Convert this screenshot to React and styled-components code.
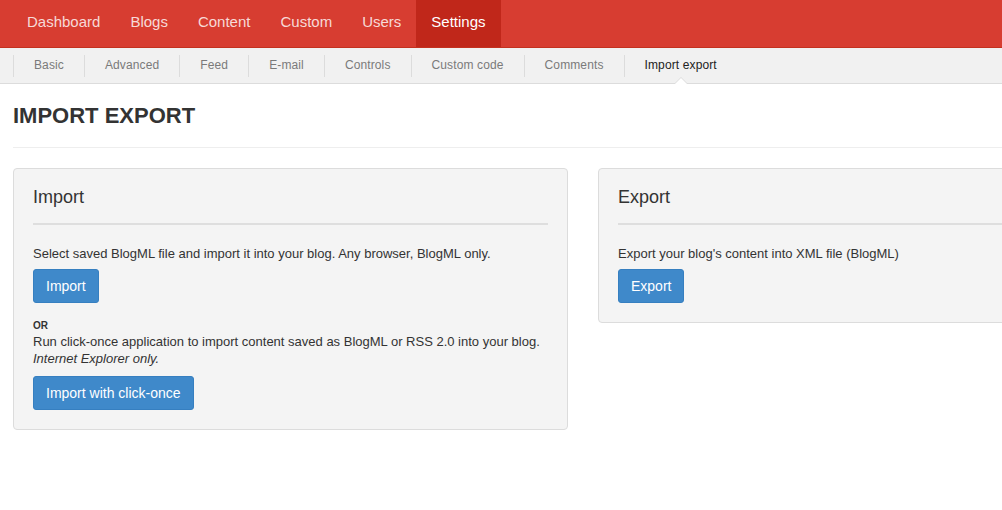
import React from "react";
import styled, { createGlobalStyle } from "styled-components";

const GlobalStyle = createGlobalStyle`
  html, body {
    margin: 0;
    padding: 0;
    background: #fff;
    font-family: "Liberation Sans", Arial, sans-serif;
    color: #333;
    overflow: hidden;
  }
  * {
    box-sizing: border-box;
  }
`;

const TopNav = styled.nav`
  display: flex;
  background: #d73d31;
  border-bottom: 1px solid #c3311f;
  padding-left: 12px;
`;

const TopItem = styled.a`
  display: block;
  padding: 12px 15px 15px;
  font-size: 15px;
  line-height: 20px;
  text-decoration: none;
  color: ${(props) => (props.active ? "#fff" : "rgba(255, 255, 255, 0.82)")};
  background: ${(props) => (props.active ? "#c0271a" : "transparent")};
  cursor: pointer;
`;

const SubNav = styled.nav`
  display: flex;
  background: #f1f1f1;
  border-bottom: 1px solid #dcdcdc;
  padding: 7px 0 6px 13px;
`;

const SubItem = styled.a`
  position: relative;
  display: block;
  padding: 2px 20px 3px;
  border-left: 1px solid #dcdcdc;
  font-size: 12px;
  line-height: 17px;
  letter-spacing: 0.12px;
  text-decoration: none;
  color: ${(props) => (props.active ? "#222" : "#7a7a7a")};
  cursor: pointer;

  ${(props) =>
    props.active &&
    `
    &::before,
    &::after {
      content: "";
      position: absolute;
      left: 50%;
      width: 0;
      height: 0;
      border-style: solid;
      border-color: transparent;
    }
    &::before {
      bottom: -7px;
      margin-left: -7px;
      border-width: 0 7px 7px 7px;
      border-bottom-color: #dcdcdc;
    }
    &::after {
      bottom: -7px;
      margin-left: -6px;
      border-width: 0 6px 6px 6px;
      border-bottom-color: #fff;
    }
  `}
`;

const Page = styled.main`
  padding: 0 0 0 13px;
`;

const PageHeader = styled.header`
  border-bottom: 1px solid #eee;
  padding: 20px 0 19px;
  margin-bottom: 20px;
`;

const Title = styled.h1`
  margin: 0;
  font-size: 22px;
  line-height: 24px;
  font-weight: bold;
  color: #333;
  white-space: nowrap;
`;

const Columns = styled.div`
  display: grid;
  grid-template-columns: 555px 555px;
  gap: 30px;
  align-items: start;
`;

const Panel = styled.section`
  background: #f4f4f4;
  border: 1px solid #dcdcdc;
  border-radius: 4px;
  padding: 18px 19px 19px;
`;

const PanelTitle = styled.h2`
  margin: 0;
  padding-bottom: 16px;
  border-bottom: 2px solid #dedede;
  font-size: 18px;
  line-height: 20px;
  font-weight: normal;
  color: #333;
`;

const Text = styled.p`
  margin: ${(props) => props.$mt || "0"} 0 0;
  font-size: 13px;
  line-height: 17px;
  color: #333;
  white-space: nowrap;

  em {
    font-style: italic;
  }
`;

const Or = styled.div`
  margin-top: 17px;
  font-size: 10px;
  line-height: 12px;
  font-weight: bold;
  color: #333;
`;

const Button = styled.button`
  display: inline-block;
  margin-top: ${(props) => props.$mt || "7px"};
  padding: 6px 12px;
  font-family: "Liberation Sans", Arial, sans-serif;
  font-size: 14px;
  line-height: 20px;
  color: #fff;
  background: #3f89ca;
  border: 1px solid #367fc0;
  border-radius: 3px;
  cursor: pointer;
`;

const topItems = ["Dashboard", "Blogs", "Content", "Custom", "Users", "Settings"];
const subItems = [
  "Basic",
  "Advanced",
  "Feed",
  "E-mail",
  "Controls",
  "Custom code",
  "Comments",
  "Import export",
];

const App = () => {
  return (
    <>
      <GlobalStyle />
      <TopNav>
        {topItems.map((item) => (
          <TopItem key={item} active={item === "Settings"}>
            {item}
          </TopItem>
        ))}
      </TopNav>
      <SubNav>
        {subItems.map((item) => (
          <SubItem key={item} active={item === "Import export"}>
            {item}
          </SubItem>
        ))}
      </SubNav>
      <Page>
        <PageHeader>
          <Title>IMPORT EXPORT</Title>
        </PageHeader>
        <Columns>
          <Panel>
            <PanelTitle>Import</PanelTitle>
            <Text $mt="20px">
              Select saved BlogML file and import it into your blog. Any browser, BlogML only.
            </Text>
            <Button type="button">Import</Button>
            <Or>OR</Or>
            <Text $mt="1px">
              Run click-once application to import content saved as BlogML or RSS 2.0 into your blog.
              <br />
              <em>Internet Explorer only.</em>
            </Text>
            <Button type="button" $mt="9px">
              Import with click-once
            </Button>
          </Panel>
          <Panel>
            <PanelTitle>Export</PanelTitle>
            <Text $mt="20px">Export your blog's content into XML file (BlogML)</Text>
            <Button type="button">Export</Button>
          </Panel>
        </Columns>
      </Page>
    </>
  );
};

export default App;
